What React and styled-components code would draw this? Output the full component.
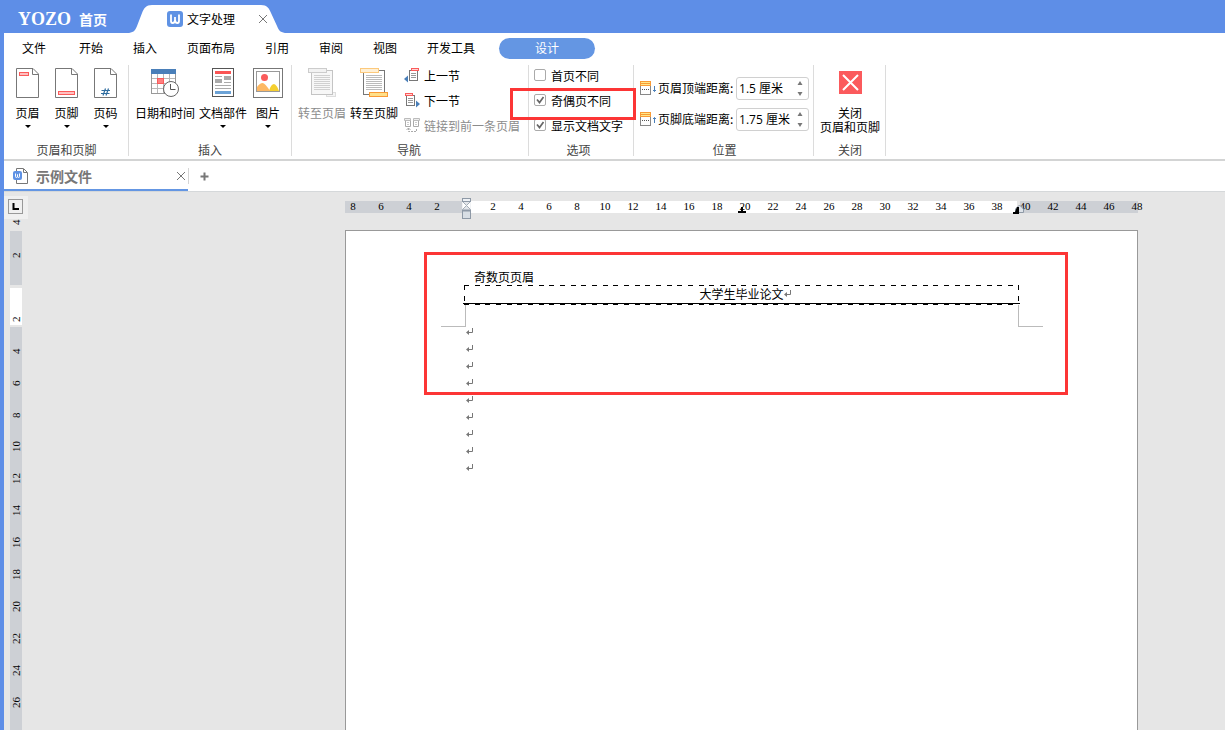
import React, { useState } from "react";
import styled, { createGlobalStyle, css } from "styled-components";

const GlobalStyle = createGlobalStyle`
  * {
    box-sizing: border-box;
  }

  body {
    margin: 0;
    font-family: "Noto Sans CJK SC", sans-serif;
    font-size: 12px;
    color: #000;
  }

  button, input {
    font: inherit;
    color: inherit;
  }

  button {
    border: 0;
    padding: 0;
    background: none;
    cursor: pointer;
    white-space: nowrap;
  }

  svg {
    display: block;
    flex-shrink: 0;
  }
`;

const Window = styled.div`
  display: flex;
  flex-direction: column;
  height: 100vh;
  overflow: hidden;
  border-left: 4px solid #5e8ee7;
  background-color: #fff;
`;

/* ---- title bar ---- */

const TitleBar = styled.header`
  display: flex;
  align-items: flex-end;
  flex-shrink: 0;
  height: 33px;
  background-color: #5e8ee7;
`;

const HomeLink = styled.a`
  display: flex;
  align-items: center;
  gap: 8px;
  height: 28px;
  padding-left: 14px;
  color: #fff;
  font-size: 14px;
  font-weight: bold;
  text-decoration: none;
`;

const Logo = styled.span`
  font-family: "Liberation Serif", serif;
  font-size: 18px;
`;

const AppTab = styled.div`
  display: flex;
  align-items: center;
  width: 160px;
  height: 28px;
  margin-left: 20px;
  padding: 0 19px 0 40px;
  background-color: #fff;
  clip-path: path("M0 28 C6 28 8 26 10 21 L15 8 C17 3 19 0 25 0 L134 0 C140 0 142 3 144 8 L150 21 C152 26 154 28 160 28 Z");
`;

const AppTabTitle = styled.span`
  flex-grow: 1;
  margin-left: 4px;
  padding-bottom: 2px;
`;

/* ---- menu ---- */

const Menu = styled.nav`
  display: flex;
  align-items: center;
  flex-shrink: 0;
  height: 32px;
  padding: 0 3px 1px;
`;

const MenuButton = styled.button`
  height: 21px;
  padding: 0 15px 2px;
  line-height: 19px;

  &:first-child {
    margin-right: 3px;
  }

  ${(props) =>
    props.$active &&
    css`
      width: 96px;
      margin-left: 9px;
      border-radius: 11px;
      background-color: #6496e3;
      color: #fff;
    `}
`;

/* ---- ribbon ---- */

const Ribbon = styled.div`
  display: flex;
  flex-shrink: 0;
  padding-bottom: 3px;
  border-bottom: 2px solid #d3d4d4;
`;

const Group = styled.section`
  position: relative;
  display: flex;
  flex-direction: column;
  height: 91px;
  padding: 0 ${(props) => props.$right || 0}px 0 ${(props) => props.$left || 0}px;
  border-right: 1px solid #dcdcdc;
`;

const GroupBody = styled.div`
  display: flex;
  flex-grow: 1;
  gap: ${(props) => props.$gap || 0}px;
`;

const GroupTitle = styled.div`
  height: 12px;
  line-height: 12px;
  text-align: center;
  color: #444;
`;

const BigButton = styled.button`
  display: flex;
  flex-direction: column;
  align-items: center;
  align-self: flex-start;
  min-width: ${(props) => props.$width || 0}px;
  padding-top: 3px;

  &:disabled {
    color: #8c8c8c;
  }
`;

const IconBox = styled.span`
  display: flex;
  justify-content: center;
  height: 30px;
`;

const BigLabel = styled.span`
  margin-top: 6px;
  line-height: 18px;
`;

const CloseLabel = styled.span`
  margin-top: 8px;
  line-height: 14px;
`;

const Arrow = styled.span`
  margin-top: 3px;
  border: 3px solid transparent;
  border-top-color: #000;
  border-bottom: 0;
`;

const Rows = styled.div`
  display: flex;
  flex-direction: column;
  gap: 5px;
  margin-left: ${(props) => props.$left || 0}px;
`;

const SmallButton = styled.button`
  display: flex;
  align-items: center;
  gap: 4px;
  height: 20px;

  &:disabled {
    color: #8c8c8c;
  }
`;

const CheckLabel = styled.label`
  display: flex;
  align-items: center;
  gap: 5px;
  height: 20px;
  white-space: nowrap;
`;

const CheckBox = styled.input`
  appearance: none;
  width: 12px;
  height: 12px;
  margin: 0;
  border: 1px solid #aaa;
  border-radius: 2px;
  background: #fff center / 10px no-repeat;

  &:checked {
    background-image: url("data:image/svg+xml,%3Csvg xmlns='http://www.w3.org/2000/svg' viewBox='0 0 10 10'%3E%3Cpath d='M2 4.5L4.5 7.5L8.5 2' fill='none' stroke='%23666' stroke-width='1.7'/%3E%3C/svg%3E");
  }
`;

const Fields = styled.div`
  display: flex;
  flex-direction: column;
  gap: 8px;
  padding-top: 12px;
`;

const Field = styled.div`
  display: flex;
  align-items: center;
`;

const FieldLabel = styled.label`
  width: 78px;
  margin-left: 1px;
  padding-bottom: 2px;
  white-space: nowrap;
`;

const SpinBox = styled.div`
  display: flex;
  width: 73px;
  height: 23px;
  border: 1px solid #d0d0d0;
  border-radius: 3px;
`;

const SpinInput = styled.input`
  flex: 1;
  min-width: 0;
  padding: 0 0 2px 2px;
  border: 0;
  outline: none;
  background: none;
  font-family: "Open Sans", "Noto Sans CJK SC", sans-serif;
`;

const SpinArrows = styled.div`
  display: flex;
  flex-direction: column;
  width: 17px;
`;

const SpinButton = styled.button`
  display: flex;
  flex: 1;
  align-items: center;
  justify-content: center;
`;

const Highlight = styled.div`
  position: absolute;
  top: ${(props) => props.$top}px;
  left: ${(props) => props.$left}px;
  right: ${(props) => props.$right}px;
  height: ${(props) => props.$height}px;
  border: 3px solid #fc3535;
  pointer-events: none;
`;

/* ---- document tabs ---- */

const DocTabs = styled.div`
  display: flex;
  flex-shrink: 0;
  align-items: center;
  height: 31px;
  border-bottom: 1px solid #d5d8da;
`;

const DocTab = styled.div`
  display: flex;
  align-items: center;
  gap: 7px;
  width: 184px;
  height: 30px;
  padding: 2px 2px 0 9px;
  border-bottom: 2px solid #6496e3;
`;

const DocTabTitle = styled.span`
  flex-grow: 1;
  font-size: 14px;
  font-weight: bold;
  line-height: 20px;
  color: #777;
`;

const NewTabButton = styled.button`
  display: flex;
  align-items: center;
  height: 16px;
  padding: 0 11px;
  border-left: 1px solid #d5d5d5;
`;

/* ---- workspace ---- */

const Workspace = styled.main`
  display: flex;
  flex: 1;
  min-height: 0;
  overflow: hidden;
  background-color: #e6e6e6;
`;

const RulerColumn = styled.div`
  display: flex;
  flex-direction: column;
  width: 24px;
  padding-top: 4px;
`;

const Corner = styled.div`
  flex-shrink: 0;
  height: 23px;
  padding: 3px 4px;
  background-color: #f0f0f0;
`;

const TabStopButton = styled.button`
  display: flex;
  align-items: center;
  justify-content: center;
  width: 15px;
  height: 15px;
  border: 1px solid #999;
`;

const VerticalRuler = styled.div`
  display: flex;
  flex: 1;
  flex-direction: column;
  width: 12px;
  margin-left: 6px;
  overflow: hidden;
  font-family: "Liberation Serif", serif;
  font-size: 11px;
  background: linear-gradient(
    transparent 12px,
    #cdd0d5 12px 66px,
    transparent 66px 69px,
    #fff 69px 106px,
    transparent 106px 108px,
    #cdd0d5 108px
  );
`;

const VerticalTick = styled.span`
  display: flex;
  flex-shrink: 0;
  align-items: center;
  justify-content: center;
  width: 12px;
  height: 32px;
  line-height: 12px;
  writing-mode: vertical-rl;
  transform: rotate(180deg);

  &:first-child {
    height: 20px;
    padding-bottom: 1px;
    justify-content: flex-end;
  }
`;

const Canvas = styled.div`
  display: flex;
  flex: 1;
  flex-direction: column;
  align-items: flex-end;
  gap: 17px;
  padding: 9px 87px 0 0;
`;

const Ruler = styled.div`
  position: relative;
  display: flex;
  flex-shrink: 0;
  width: 793px;
  height: 12px;
  font-family: "Liberation Serif", serif;
  font-size: 11px;
  line-height: 11px;
  background: linear-gradient(
    90deg,
    #cdd0d5 121px,
    #fff 121px 672px,
    transparent 672px 675px,
    #cdd0d5 675px
  );
`;

const Tick = styled.span`
  flex-shrink: 0;
  width: 28px;
  text-align: center;

  &:first-child {
    margin-left: -6px;
  }
`;

const Marker = styled.svg`
  position: absolute;
  top: ${(props) => props.$top}px;
  left: ${(props) => props.$left}px;
`;

const Page = styled.article`
  position: relative;
  flex: 1;
  width: 793px;
  padding-top: 38px;
  border: 1px solid #999;
  border-bottom: 0;
  background-color: #fff;
`;

const HeaderName = styled.div`
  padding-left: 128px;
  line-height: 16px;
`;

const dashes = "#000 0 5px, transparent 5px 11px, #000 11px 16px, transparent 16px 21px, #000 21px 26px, transparent 26px 32px";

const HeaderFrame = styled.div`
  position: relative;
  height: 20px;
  margin: 0 118px;
  text-align: center;
  line-height: 18px;
  background:
    repeating-linear-gradient(90deg, ${dashes}) top / 100% 1px no-repeat,
    repeating-linear-gradient(90deg, ${dashes}) bottom / 100% 1px no-repeat,
    repeating-linear-gradient(${dashes}) left / 1px 100% no-repeat,
    repeating-linear-gradient(${dashes}) right / 1px 100% no-repeat;

  &::after {
    content: "";
    position: absolute;
    left: -1px;
    right: -1px;
    bottom: 1px;
    height: 1px;
    background-color: #000;
  }
`;

const HeaderText = styled.span`
  position: relative;
`;

const HeaderReturn = styled.span`
  position: absolute;
  left: 100%;
  top: 4px;
`;

const MarginCorners = styled.div`
  display: flex;
  justify-content: space-between;
  margin: 0 94px 0 95px;
`;

const MarginCorner = styled.div`
  width: 25px;
  height: 22px;
  border-bottom: 1px solid #bbb;
  border-${(props) => props.$side}: 1px solid #bbb;
`;

const Paragraph = styled.p`
  display: flex;
  align-items: center;
  height: 17px;
  margin: 0 0 0 120px;
`;

const Paragraphs = styled.div`
  margin-top: -4px;
`;

/* ---- icons ---- */

const WordIcon = () => (
  <svg width="16" height="16" viewBox="0 0 16 16">
    <rect width="16" height="16" rx="3" fill="#5f92e4" />
    <path d="M4 3.500V10Q4 12 5.500 12Q8 12 8 9V6V9Q8 12 10.500 12Q12 12 12 10V3.500" fill="none" stroke="#fff" strokeWidth="1.800" />
  </svg>
);

const CrossIcon = ({ size = 10 }) => (
  <svg width={size} height={size} viewBox="0 0 10 10">
    <path d="M1 1L9 9M9 1L1 9" stroke="#777" fill="none" />
  </svg>
);

const SheetIcon = ({ children }) => (
  <svg width="24" height="30" viewBox="0 0 24 30">
    <path d="M0.500 0.500H17L22.500 6V29.500H0.500Z" fill="#fff" stroke="#777" />
    <path d="M16.500 0.500V6.500H22" fill="none" stroke="#777" />
    {children}
  </svg>
);

const HeaderIcon = () => (
  <SheetIcon>
    <rect x="3.500" y="4.500" width="9" height="3" fill="#ffc0c0" stroke="#fa5b5b" />
  </SheetIcon>
);

const FooterIcon = () => (
  <SheetIcon>
    <rect x="3.500" y="23.500" width="16" height="3" fill="#ffc0c0" stroke="#fa5b5b" />
  </SheetIcon>
);

const PageNumberIcon = () => (
  <SheetIcon>
    <path d="M7.500 22.500H16M7 25.500H15.500M11.500 20.500L9 27.500M14.500 20.500L12 27.500" fill="none" stroke="#2f6d9f" strokeWidth="1.200" />
  </SheetIcon>
);

const DateIcon = () => (
  <svg width="30" height="30" viewBox="0 0 30 30">
    <rect x="1.500" y="1.500" width="24" height="24" fill="#fff" stroke="#999" />
    <path d="M7.500 6V25M13.500 6V25M19.500 6V25M2 10.500H25M2 15.500H25M2 20.500H25" stroke="#b8b8b8" />
    <rect x="1" y="1" width="25" height="5" fill="#4a7fb9" />
    <rect x="7.500" y="10.500" width="6" height="5" fill="#ff8080" stroke="#fa5b5b" />
    <circle cx="21" cy="21" r="7.500" fill="#fff" stroke="#666" />
    <path d="M20.500 16V21.500H25.500" fill="none" stroke="#555" />
  </svg>
);

const PartsIcon = () => (
  <svg width="22" height="30" viewBox="0 0 22 30">
    <rect x="0.500" y="0.500" width="21" height="28" fill="#fff" stroke="#555" />
    <rect x="3" y="3" width="16" height="3" fill="#fa5555" />
    <path d="M3 8.500H10M3 17.500H19M12 14.500H19M3 20.500H19" stroke="#aaa" />
    <rect x="3" y="11" width="7" height="4" fill="#aaa" />
    <rect x="12" y="8" width="7" height="4" fill="#aaa" />
    <rect x="3" y="23" width="16" height="3" fill="#6ba2d6" />
  </svg>
);

const PictureIcon = () => (
  <svg width="30" height="30" viewBox="0 0 30 30">
    <rect x="0.500" y="0.500" width="29" height="29" fill="#fff" stroke="#777" />
    <rect x="3.500" y="3.500" width="23" height="20" fill="#fff" stroke="#999" />
    <circle cx="11.500" cy="9.500" r="3.500" fill="#fa5b5b" />
    <path d="M16 23Q18 16 21 16Q24 17 26 23Z" fill="#f5cf2f" />
    <path d="M4 23V19Q7 15 9.500 15Q12 15 17 23Z" fill="#fdb863" />
  </svg>
);

const GoHeaderIcon = () => (
  <svg width="28" height="30" viewBox="0 0 28 30">
    <rect x="18.500" y="24.500" width="9" height="4" fill="#f5f5f5" stroke="#ddd" />
    <rect x="3.500" y="2.500" width="21" height="24" fill="#f7f7f7" stroke="#c4c4c4" />
    <path d="M6 7.500H22M6 9.500H22M6 11.500H22M6 13.500H22M6 15.500H22M6 17.500H22M6 19.500H22M6 21.500H22" stroke="#d0d0d0" />
    <rect x="0.500" y="0.500" width="18" height="4" fill="#f2f2f2" stroke="#ccc" />
  </svg>
);

const GoFooterIcon = () => (
  <svg width="28" height="30" viewBox="0 0 28 30">
    <rect x="3.500" y="2.500" width="21" height="24" fill="#fff" stroke="#777" />
    <path d="M6 7.500H22M6 9.500H22M6 11.500H22M6 13.500H22M6 15.500H22M6 17.500H22M6 19.500H22M6 21.500H22" stroke="#bbb" />
    <rect x="0.500" y="0.500" width="18" height="4" fill="#fff0d5" stroke="#fcc97c" />
    <rect x="9.500" y="24.500" width="18" height="4" fill="#ffe08a" stroke="#f99a35" />
  </svg>
);

const PrevIcon = () => (
  <svg width="16" height="16" viewBox="0 0 16 16">
    <rect x="5.500" y="3.500" width="8" height="10" fill="#fff" stroke="#777" />
    <path d="M7 6.500H12M7 8.500H12M7 10.500H12" stroke="#999" />
    <rect x="7.500" y="1.500" width="7" height="2" fill="#ffd5d5" stroke="#fa5b5b" />
    <path d="M0 12L4 8.500V15.500Z" fill="#4a7fb9" />
  </svg>
);

const NextIcon = () => (
  <svg width="16" height="16" viewBox="0 0 16 16">
    <rect x="2.500" y="3.500" width="8" height="10" fill="#fff" stroke="#777" />
    <path d="M4 6.500H9M4 8.500H9M4 10.500H9" stroke="#999" />
    <rect x="1.500" y="1.500" width="7" height="2" fill="#ffd5d5" stroke="#fa5b5b" />
    <path d="M16 12L12 8.500V15.500Z" fill="#4a7fb9" />
  </svg>
);

const LinkPrevIcon = () => (
  <svg width="16" height="16" viewBox="0 0 16 16">
    <path d="M1.500 3V9.500H6.500V3M9.500 3V9.500H14.500V3" fill="none" stroke="#aaa" />
    <path d="M0.500 1.500H6.500V3.500H0.500ZM9.500 1.500H15.500V3.500H9.500Z" fill="#eee" stroke="#bbb" />
    <path d="M3 5.500H5M3 7.500H5M11 5.500H13M11 7.500H13" stroke="#ccc" />
    <path d="M4.500 11V14.500H12.500V11" fill="none" stroke="#aaa" strokeDasharray="2 1" />
    <path d="M2.500 13L4.500 11L6.500 13" fill="none" stroke="#aaa" />
  </svg>
);

const DistanceIcon = ({ up }) => (
  <svg width="17" height="15" viewBox="0 0 17 15">
    <rect x="0.500" y="0.500" width="10" height="13" fill="#fff" stroke="#888" />
    <rect x="0.500" y="0.500" width="10" height="4" fill="#ffe88a" stroke="#f99a35" />
    <path d="M1 2.500H10" stroke="#f99a35" />
    <path d="M2 8.500H10" stroke="#555" strokeDasharray="1 1" />
    <path d={up ? "M14.500 5.500V11M13 7L14.500 5.500L16 7" : "M14.500 5V10.500M13 9L14.500 10.500L16 9"} fill="none" stroke="#4a7fb9" />
  </svg>
);

const CloseIcon = () => (
  <svg width="23" height="30" viewBox="0 0 23 30">
    <rect y="3" width="23" height="23" fill="#fb5a5c" />
    <path d="M4 7L19 22M19 7L4 22" stroke="#fff" strokeWidth="2" />
  </svg>
);

const SpinIcon = ({ down }) => (
  <svg width="6" height="4" viewBox="0 0 6 4">
    <path d={down ? "M0.500 0H5.500L3 4Z" : "M0.500 4H5.500L3 0Z"} fill="#777" />
  </svg>
);

const DocIcon = () => (
  <svg width="16" height="16" viewBox="0 0 16 16">
    <path d="M3.500 0.500H10.500L14.500 4.500V15.500H3.500Z" fill="#fff" stroke="#777" />
    <path d="M10.500 1V4.500H14" fill="none" stroke="#777" />
    <rect y="3" width="9" height="9" rx="2" fill="#5f92e4" />
    <path d="M2.500 5.500V8.500Q2.500 9.500 3.500 9.500Q4.500 9.500 4.500 8V6.500V8Q4.500 9.500 5.500 9.500Q6.500 9.500 6.500 8.500V5.500" fill="none" stroke="#fff" />
  </svg>
);

const PlusIcon = () => (
  <svg width="9" height="9" viewBox="0 0 9 9">
    <path d="M4.500 0.500V8.500M0.500 4.500H8.500" stroke="#777" strokeWidth="2" />
  </svg>
);

const ReturnIcon = () => (
  <svg width="8" height="9" viewBox="0 0 8 9">
    <path d="M6.500 1V5.500H1" fill="none" stroke="#777" />
    <path d="M0 5.500L3 3V8Z" fill="#777" />
  </svg>
);

/* ---- app ---- */

const menuItems = ["文件", "开始", "插入", "页面布局", "引用", "审阅", "视图", "开发工具", "设计"];

// one entry per two characters, the margin itself has no number
const rulerNumbers = [8, 6, 4, 2, ""].concat(Array.from({ length: 24 }, (_, i) => (i + 1) * 2));
const verticalNumbers = [4, 2, ""].concat(Array.from({ length: 13 }, (_, i) => (i + 1) * 2));

const RibbonButton = ({ icon, label, arrow, width, disabled }) => (
  <BigButton type="button" $width={width} disabled={disabled}>
    <IconBox>{icon}</IconBox>
    <BigLabel>{label}</BigLabel>
    {arrow && <Arrow />}
  </BigButton>
);

const Check = ({ label, defaultChecked }) => (
  <CheckLabel>
    <CheckBox type="checkbox" defaultChecked={defaultChecked} />
    {label}
  </CheckLabel>
);

const DistanceField = ({ id, label, start, up }) => {
  const [value, setValue] = useState(start);

  const step = (amount) => {
    const next = Math.max(0, (parseFloat(value) || 0) + amount);
    setValue(Math.round(next * 100) / 100 + " 厘米");
  };

  return (
    <Field>
      <DistanceIcon up={up} />
      <FieldLabel htmlFor={id}>{label}</FieldLabel>
      <SpinBox>
        <SpinInput id={id} value={value} onChange={(e) => setValue(e.target.value)} />
        <SpinArrows>
          <SpinButton type="button" aria-label="增加" onClick={() => step(0.1)}>
            <SpinIcon />
          </SpinButton>
          <SpinButton type="button" aria-label="减少" onClick={() => step(-0.1)}>
            <SpinIcon down />
          </SpinButton>
        </SpinArrows>
      </SpinBox>
    </Field>
  );
};

const App = () => {
  const [activeMenu, setActiveMenu] = useState("设计");

  return (
    <Window>
      <GlobalStyle />
      <TitleBar>
        <HomeLink href="#home">
          <Logo>YOZO</Logo>
          首页
        </HomeLink>
        <AppTab>
          <WordIcon />
          <AppTabTitle>文字处理</AppTabTitle>
          <button type="button" aria-label="关闭">
            <CrossIcon />
          </button>
        </AppTab>
      </TitleBar>

      <Menu>
        {menuItems.map((item) => (
          <MenuButton key={item} type="button" $active={item === activeMenu} onClick={() => setActiveMenu(item)}>
            {item}
          </MenuButton>
        ))}
      </Menu>

      <Ribbon>
        <Group $left={4} $right={3}>
          <GroupBody>
            <RibbonButton width={39} icon={<HeaderIcon />} label="页眉" arrow />
            <RibbonButton width={39} icon={<FooterIcon />} label="页脚" arrow />
            <RibbonButton width={39} icon={<PageNumberIcon />} label="页码" arrow />
          </GroupBody>
          <GroupTitle>页眉和页脚</GroupTitle>
        </Group>
        <Group $left={6} $right={6}>
          <GroupBody $gap={4}>
            <RibbonButton icon={<DateIcon />} label="日期和时间" />
            <RibbonButton icon={<PartsIcon />} label="文档部件" arrow />
            <RibbonButton width={34} icon={<PictureIcon />} label="图片" arrow />
          </GroupBody>
          <GroupTitle>插入</GroupTitle>
        </Group>
        <Group $left={6} $right={8}>
          <GroupBody $gap={4}>
            <RibbonButton icon={<GoHeaderIcon />} label="转至页眉" disabled />
            <RibbonButton icon={<GoFooterIcon />} label="转至页脚" />
            <Rows $left={2}>
              <SmallButton type="button">
                <PrevIcon />
                上一节
              </SmallButton>
              <SmallButton type="button">
                <NextIcon />
                下一节
              </SmallButton>
              <SmallButton type="button" disabled>
                <LinkPrevIcon />
                链接到前一条页眉
              </SmallButton>
            </Rows>
          </GroupBody>
          <GroupTitle>导航</GroupTitle>
        </Group>
        <Group $left={5} $right={10}>
          <GroupBody>
            <Rows>
              <Check label="首页不同" />
              <Check label="奇偶页不同" defaultChecked />
              <Check label="显示文档文字" defaultChecked />
            </Rows>
          </GroupBody>
          <GroupTitle>选项</GroupTitle>
          <Highlight $top={23} $left={-19} $right={-3} $height={32} />
        </Group>
        <Group $left={6} $right={4}>
          <GroupBody>
            <Fields>
              <DistanceField id="header-distance" label="页眉顶端距离:" start="1.5 厘米" />
              <DistanceField id="footer-distance" label="页脚底端距离:" start="1.75 厘米" up />
            </Fields>
          </GroupBody>
          <GroupTitle>位置</GroupTitle>
        </Group>
        <Group $left={6} $right={5}>
          <GroupBody>
            <BigButton type="button">
              <IconBox>
                <CloseIcon />
              </IconBox>
              <CloseLabel>
                关闭
                <br />
                页眉和页脚
              </CloseLabel>
            </BigButton>
          </GroupBody>
          <GroupTitle>关闭</GroupTitle>
        </Group>
      </Ribbon>

      <DocTabs>
        <DocTab>
          <DocIcon />
          <DocTabTitle>示例文件</DocTabTitle>
          <button type="button" aria-label="关闭文档">
            <CrossIcon />
          </button>
        </DocTab>
        <NewTabButton type="button" aria-label="新建">
          <PlusIcon />
        </NewTabButton>
      </DocTabs>

      <Workspace>
        <RulerColumn>
          <Corner>
            <TabStopButton type="button" aria-label="制表位">
              <svg width="7" height="7" viewBox="0 0 7 7">
                <path d="M1.500 0V6H7" fill="none" stroke="#000" strokeWidth="2" />
              </svg>
            </TabStopButton>
          </Corner>
          <VerticalRuler>
            {verticalNumbers.map((n, i) => (
              <VerticalTick key={i}>{n}</VerticalTick>
            ))}
          </VerticalRuler>
        </RulerColumn>
        <Canvas>
          <Ruler>
            {rulerNumbers.map((n, i) => (
              <Tick key={i}>{n}</Tick>
            ))}
            <Marker $top={-3} $left={117} width="9" height="21" viewBox="0 0 9 21">
              <rect width="9" height="21" fill="#e3e6ea" />
              <path d="M0.500 3.500L4.500 7.500L0.500 11.500M8.500 3.500L4.500 7.500L8.500 11.500" fill="#fff" stroke="#a5aeb8" />
              <rect x="0.500" y="0.500" width="8" height="3" fill="#eef1f5" stroke="#8e99a6" />
              <rect x="0.500" y="12.500" width="8" height="8" fill="#d8dee4" stroke="#8e99a6" />
              <path d="M0 12.500H9" stroke="#8e99a6" strokeWidth="2" />
            </Marker>
            <Marker $top={6} $left={393} width="8" height="6" viewBox="0 0 8 6">
              <path d="M4 0V5M0 5H8" fill="none" stroke="#000" strokeWidth="2" />
            </Marker>
            <Marker $top={3} $left={668} width="12" height="10" viewBox="0 0 12 10">
              <path d="M2.500 8.500V5L6.500 1L10.500 5V8.500Z" fill="#dde2e8" stroke="#8e99a6" />
              <path d="M0 10V8H2L4 3H6V10Z" fill="#000" />
            </Marker>
          </Ruler>
          <Page>
            <HeaderName>奇数页页眉</HeaderName>
            <HeaderFrame>
              <HeaderText>
                大学生毕业论文
                <HeaderReturn>
                  <ReturnIcon />
                </HeaderReturn>
              </HeaderText>
            </HeaderFrame>
            <MarginCorners>
              <MarginCorner $side="right" />
              <MarginCorner $side="left" />
            </MarginCorners>
            <Paragraphs>
              {Array.from({ length: 9 }, (_, i) => (
                <Paragraph key={i}>
                  <ReturnIcon />
                </Paragraph>
              ))}
            </Paragraphs>
            <Highlight $top={21} $left={78} $right={69} $height={143} />
          </Page>
        </Canvas>
      </Workspace>
    </Window>
  );
};

export default App;
